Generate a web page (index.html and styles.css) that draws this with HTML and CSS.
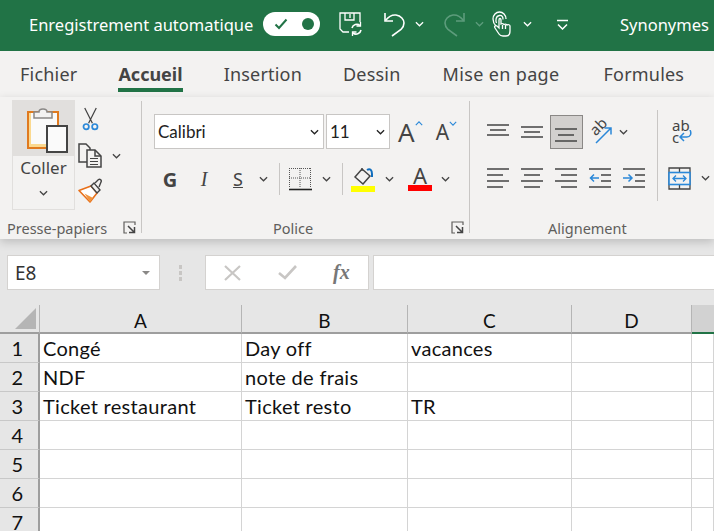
FILE: index.html
```html
<!DOCTYPE html>
<html lang="fr">
<head>
    <meta charset="UTF-8">
    <title>Synonymes - Excel</title>
    <link rel="stylesheet" href="styles.css">
</head>
<body>
<svg class="defs" width="0" height="0">
    <symbol id="chev" viewBox="0 0 10 6"><path d="M1 1l4 4 4-4" fill="none" stroke="currentColor" stroke-width="1.4"/></symbol>
    <symbol id="launcher" viewBox="0 0 13 13"><path d="M12 4V1H1v11h3" fill="none" stroke="#605e5c" stroke-width="1.2"/><path d="M5 5l6 6M6 11.5h5.500V6" fill="none" stroke="#444" stroke-width="1.5"/></symbol>
</svg>

<div class="titlebar">
    <span class="autosave">Enregistrement automatique</span>
    <div class="toggle">
        <svg width="14" height="12" viewBox="0 0 14 12"><path d="M1.5 6.5l3.5 3.5 7.5-8.5" fill="none" stroke="#217346" stroke-width="2"/></svg>
        <span class="knob"></span>
    </div>
    <svg class="qat-save" width="25" height="26" viewBox="0 0 25 26" fill="none" stroke="#fff" stroke-width="1.3">
        <path d="M11 21H5l-3-3V2h20v9"/><path d="M7 2v7h9V2M12 3v4"/>
        <path d="M14 17a5 5 0 0 1 8-2.5M23 19a5 5 0 0 1-8 3" stroke-width="1.6"/><path d="M22.5 11v4h-4M14.5 25v-4h4"/>
    </svg>
    <svg class="qat-undo" width="23" height="26" viewBox="0 0 23 26" fill="none" stroke="#fff" stroke-width="1.6"><path d="M2 2v8h8"/><path d="M2.5 9.500C6 5 9 3.500 13 4c5 .7 8 4.500 8 8 0 3-1.500 5-3 6.500L9 25"/></svg>
    <svg class="qat-chev" width="9" height="6"><use href="#chev"/></svg>
    <svg class="qat-redo" width="23" height="26" viewBox="0 0 23 26" fill="none" stroke="#5d9c7c" stroke-width="1.6"><path d="M21 2v8h-8"/><path d="M20.5 9.500C17 5 14 3.500 10 4c-5 .7-8 4.500-8 8 0 3 1.500 5 3 6.500L14 25"/></svg>
    <svg class="qat-chev dim" width="9" height="6"><use href="#chev"/></svg>
    <svg class="qat-touch" width="19" height="26" viewBox="0 0 19 26" fill="none" stroke="#fff" stroke-width="1.3">
        <path d="M4 15C2 13 1 11 1 8c0-4 3-7 6.500-7S14 4 14 8"/><path d="M4.500 12C3.500 10 3.500 5 7.500 4.500c3-.3 3.500 2 3.500 4"/>
        <path d="M7 9v8l-2-2c-2-1-3 .5-2 2l4 6c1 1.500 2 2 4 2h3c3 0 4-2 4-5v-5c0-1-2-2-3-1-1-1-2-1-3-.5-1-1-2-1-3-.5V9c0-2-2-2-2 0z"/><path d="M10.500 14v4M13.500 14v4"/>
    </svg>
    <svg class="qat-chev" width="9" height="6"><use href="#chev"/></svg>
    <svg class="qat-more" width="11" height="11" viewBox="0 0 11 11" fill="none" stroke="#fff" stroke-width="1.5"><path d="M0 1.500h11M1 5.500l4.500 4.500L10 5.500"/></svg>
    <span class="doc-title">Synonymes</span>
</div>

<div class="tabs">
    <span class="tab">Fichier</span>
    <span class="tab active">Accueil</span>
    <span class="tab">Insertion</span>
    <span class="tab">Dessin</span>
    <span class="tab tab-page">Mise en page</span>
    <span class="tab tab-formulas">Formules</span>
</div>

<div class="ribbon">
    <div class="group group-clip">
        <div class="group-body clip-body">
            <div class="paste">
                <div class="paste-top">
                    <svg width="42" height="47" viewBox="0 0 42 47">
                        <rect x="2" y="5" width="30" height="36" fill="#fbd98f" stroke="#e07a1f" stroke-width="2"/>
                        <rect x="5" y="6" width="26" height="31" fill="#fafafa"/>
                        <path d="M8 11V5h5c0-4 8-4 8 0h5v6z" fill="#f3f2f1" stroke="#8a8886" stroke-width="1.5"/>
                        <rect x="21" y="19" width="20" height="26" fill="#fafafa" stroke="#444" stroke-width="2"/>
                    </svg>
                </div>
                <span class="paste-label">Coller</span>
                <svg class="ico-chev" width="9" height="6"><use href="#chev"/></svg>
            </div>
            <div class="clip-tools">
                <svg class="tool-cut" width="17" height="24" viewBox="0 0 17 25" fill="none">
                    <path d="M2.5 1l8 16M14.500 1l-8 16" stroke="#444" stroke-width="1.3"/>
                    <circle cx="4" cy="20.5" r="2.8" stroke="#2b88d8" stroke-width="1.8"/><circle cx="13" cy="20.5" r="2.8" stroke="#2b88d8" stroke-width="1.8"/>
                </svg>
                <div class="tool-copy">
                    <svg width="25" height="25" viewBox="0 0 25 25" fill="none" stroke="#444" stroke-width="1.5">
                        <path d="M9 19H1V1h7l4 4v2"/><path d="M9 7h8l6 6v11H9z" fill="#f3f2f1"/><path d="M17 7v6h6"/><path d="M12 15.5h8M12 18.500h8M12 21.500h8" stroke-width="1"/>
                    </svg>
                    <svg class="ico-chev" width="9" height="6"><use href="#chev"/></svg>
                </div>
                <svg class="tool-brush" width="25" height="25" viewBox="0 0 25 25" fill="none">
                    <path d="M1 12.500L13 8l6 7-7 9z" fill="#fff" stroke="#e8701a" stroke-width="1.6" stroke-linejoin="round"/>
                    <path d="M6.500 15.500l5.500 8.500 3-4z" fill="#f0953f"/>
                    <path d="M13 8l3-3 6 7-3 3z" fill="#f3f2f1" stroke="#444" stroke-width="1.4"/>
                    <path d="M17 5l3.500-3.500c1.500-1 3.500 1 2.500 2.500L21 9" fill="#f3f2f1" stroke="#444" stroke-width="1.4"/>
                </svg>
            </div>
        </div>
        <div class="group-label label-clip">
            <span>Presse-papiers</span>
            <svg width="13" height="13"><use href="#launcher"/></svg>
        </div>
    </div>

    <div class="group group-font">
        <div class="group-body font-body">
            <div class="font-row1">
                <div class="combo combo-font"><span class="combo-text">Calibri</span><svg width="9" height="6"><use href="#chev"/></svg></div>
                <div class="combo combo-size"><span class="combo-text">11</span><svg width="9" height="6"><use href="#chev"/></svg></div>
                <div class="grow-a big">A<svg width="8" height="5"><use href="#chev"/></svg></div>
                <div class="grow-a small">A<svg width="8" height="5"><use href="#chev"/></svg></div>
            </div>
            <div class="font-row2">
                <span class="fmt fmt-g">G</span>
                <span class="fmt fmt-i">I</span>
                <span class="fmt fmt-s">S</span>
                <svg class="ico-chev c-s" width="9" height="6"><use href="#chev"/></svg>
                <span class="vsep"></span>
                <svg class="ico-border" width="24" height="24" viewBox="0 0 24 24" fill="none" stroke="#555" stroke-width="1" stroke-dasharray="1 1">
                    <path d="M1.5 1v19M12 1v19M22.500 1v19M1 1.500h22M1 11h22"/><path d="M1 22.5h23" stroke="#222" stroke-width="1.6" stroke-dasharray="none"/>
                </svg>
                <svg class="ico-chev c-b" width="9" height="6"><use href="#chev"/></svg>
                <span class="vsep"></span>
                <div class="colour colour-fill">
                    <svg width="24" height="18" viewBox="0 0 24 18" fill="none">
                        <path d="M4 10L11 2l8 7-7 8z" stroke="#444" stroke-width="1.5"/><path d="M11 4V1" stroke="#444" stroke-width="1.3"/>
                        <path d="M16 3c3-2 5 0 5 4v3" stroke="#106ebe" stroke-width="2"/>
                    </svg>
                    <span class="swatch swatch-y"></span>
                </div>
                <svg class="ico-chev c-f" width="9" height="6"><use href="#chev"/></svg>
                <div class="colour colour-text">
                    <span class="colour-a">A</span>
                    <span class="swatch swatch-r"></span>
                </div>
                <svg class="ico-chev c-t" width="9" height="6"><use href="#chev"/></svg>
            </div>
        </div>
        <div class="group-label label-font">
            <span>Police</span>
            <svg width="13" height="13"><use href="#launcher"/></svg>
        </div>
    </div>

    <div class="group group-align">
        <div class="group-body align-body">
            <div class="align-grid">
                <div class="cell-ico"><svg width="22" height="12" viewBox="0 0 22 12" class="shift-up"><path d="M0 1h22M3 6h16M0 11h22" stroke="#444" stroke-width="1.5"/></svg></div>
                <div class="cell-ico"><svg width="22" height="12" viewBox="0 0 22 12"><path d="M0 1h22M3 6h16M0 11h22" stroke="#444" stroke-width="1.5"/></svg></div>
                <div class="cell-ico selected"><svg width="22" height="14" viewBox="0 0 22 14" class="shift-down"><path d="M0 1h22M3 7h16M0 13h22" stroke="#444" stroke-width="1.5"/></svg></div>
                <div class="cell-ico orient">
                    <span class="orient-text">ab</span>
                    <svg width="18" height="18" viewBox="0 0 18 18" fill="none" stroke="#2b88d8" stroke-width="1.5"><path d="M1 17L16 2M9.500 2H16v6.500"/></svg>
                </div>
                <svg class="ico-chev orient-chev" width="9" height="6"><use href="#chev"/></svg>
                <div class="cell-ico"><svg width="22" height="20" viewBox="0 0 22 20"><path d="M0 1h22M0 7h16M0 13h22M0 19h16" stroke="#444" stroke-width="1.5"/></svg></div>
                <div class="cell-ico"><svg width="22" height="20" viewBox="0 0 22 20"><path d="M0 1h22M3 7h16M0 13h22M3 19h16" stroke="#444" stroke-width="1.5"/></svg></div>
                <div class="cell-ico"><svg width="22" height="20" viewBox="0 0 22 20"><path d="M0 1h22M6 7h16M0 13h22M6 19h16" stroke="#444" stroke-width="1.5"/></svg></div>
                <div class="cell-ico"><svg width="22" height="20" viewBox="0 0 22 20" fill="none"><path d="M0 1h22M12 7h10M12 13h10M0 19h22" stroke="#444" stroke-width="1.5"/><path d="M10 10H1M5 6.500L1.500 10 5 13.500" stroke="#2b88d8" stroke-width="1.5"/></svg></div>
                <div class="cell-ico"><svg width="22" height="20" viewBox="0 0 22 20" fill="none"><path d="M0 1h22M12 7h10M12 13h10M0 19h22" stroke="#444" stroke-width="1.5"/><path d="M0 10h9M5.500 6.500L9 10l-3.500 3.500" stroke="#2b88d8" stroke-width="1.5"/></svg></div>
            </div>
            <span class="vsep tall"></span>
            <div class="wrap-col">
                <div class="wrap-ico">
                    <span class="wrap-text">ab<br>c</span>
                    <svg width="14" height="13" viewBox="0 0 14 13" fill="none" stroke="#2b88d8" stroke-width="1.5"><path d="M12 0c2 4 0 7-3 7H2M6 3L2 7l4 4"/></svg>
                </div>
                <div class="merge">
                    <svg width="23" height="23" viewBox="0 0 23 23" fill="none">
                        <path d="M1 1h21v21H1zM11.500 1v21" stroke="#444" stroke-width="1.3"/>
                        <rect x="1" y="5.500" width="21" height="12" fill="#f3f2f1" stroke="#2b88d8" stroke-width="1.6"/>
                        <path d="M5 11.500h13M8 8.500l-3 3 3 3M15 8.500l3 3-3 3" stroke="#2b88d8" stroke-width="1.3"/>
                    </svg>
                    <svg class="ico-chev" width="9" height="6"><use href="#chev"/></svg>
                </div>
            </div>
        </div>
        <div class="group-label label-align"><span>Alignement</span></div>
    </div>
</div>

<div class="formula">
    <div class="namebox"><span>E8</span><i class="tri"></i></div>
    <div class="grip"><i></i><i></i><i></i></div>
    <div class="fx-box">
        <svg width="17" height="16" viewBox="0 0 17 16"><path d="M1 1l15 14M16 1L1 15" stroke="#c8c6c4" stroke-width="2.2"/></svg>
        <svg width="19" height="15" viewBox="0 0 19 15"><path d="M1 8l6 5L18 1" fill="none" stroke="#c8c6c4" stroke-width="2.6"/></svg>
        <span class="fx">fx</span>
    </div>
    <div class="formula-input"></div>
</div>

<div class="sheet">
    <div class="corner"><i></i></div>
    <div class="col-head">A</div>
    <div class="col-head">B</div>
    <div class="col-head">C</div>
    <div class="col-head">D</div>
    <div class="col-head active"></div>

    <div class="row-head">1</div>
    <div class="cell">Congé</div><div class="cell">Day off</div><div class="cell">vacances</div><div class="cell"></div><div class="cell"></div>
    <div class="row-head">2</div>
    <div class="cell">NDF</div><div class="cell">note de frais</div><div class="cell"></div><div class="cell"></div><div class="cell"></div>
    <div class="row-head">3</div>
    <div class="cell">Ticket restaurant</div><div class="cell">Ticket resto</div><div class="cell">TR</div><div class="cell"></div><div class="cell"></div>
    <div class="row-head">4</div>
    <div class="cell"></div><div class="cell"></div><div class="cell"></div><div class="cell"></div><div class="cell"></div>
    <div class="row-head">5</div>
    <div class="cell"></div><div class="cell"></div><div class="cell"></div><div class="cell"></div><div class="cell"></div>
    <div class="row-head">6</div>
    <div class="cell"></div><div class="cell"></div><div class="cell"></div><div class="cell"></div><div class="cell"></div>
    <div class="row-head">7</div>
    <div class="cell"></div><div class="cell"></div><div class="cell"></div><div class="cell"></div><div class="cell"></div>
</div>
</body>
</html>
```

FILE: styles.css
```css
* {
    box-sizing: border-box;
}

html, body {
    margin: 0;
    width: 714px;
    height: 531px;
    overflow: hidden;
}

body {
    font-family: "Noto Sans", "Open Sans", sans-serif;
    background-color: #e6e6e6;
    color: #444;
}

svg {
    display: block;
    flex: none;
}

.defs {
    position: absolute;
}

/* title bar */
.titlebar {
    display: flex;
    align-items: center;
    height: 51px;
    padding: 0 0 3px 29px;
    background-color: #217346;
    color: #fff;
    white-space: nowrap;
}

.autosave {
    width: 234px;
    font-size: 16.5px;
}

.toggle {
    display: flex;
    align-items: center;
    justify-content: space-between;
    width: 57px;
    height: 24px;
    padding: 0 6px 0 11px;
    border-radius: 12px;
    background-color: #fff;
}

.knob {
    width: 12px;
    height: 12px;
    border-radius: 50%;
    background-color: #217346;
}

.qat-save { margin-left: 18px; }
.qat-undo { margin-left: 20px; }
.qat-chev { margin-left: 9px; color: #fff; }
.qat-chev.dim { color: #5d9c7c; }
.qat-redo { margin-left: 19px; }
.qat-touch { margin-left: 8px; }
.qat-touch + .qat-chev { margin-left: 12px; }
.qat-more { margin-left: 25px; }

.doc-title {
    margin-left: 52px;
    font-size: 16.5px;
}

/* tabs */
.tabs {
    display: flex;
    gap: 41px;
    height: 46px;
    padding: 10px 0 0 20px;
    background-color: #f3f2f1;
    white-space: nowrap;
}

.tab {
    height: 31px;
    font-size: 18px;
    letter-spacing: 0.2px;
    line-height: 26px;
}

.tab.active {
    font-weight: 700;
    letter-spacing: 0;
    border-bottom: 4px solid #217346;
    color: #444;
}

.tab-page { margin-left: 1px; letter-spacing: 0.35px; }
.tab-formulas { margin-left: 3px; }

/* ribbon */
.ribbon {
    display: flex;
    height: 142px;
    background-color: #f3f2f1;
    box-shadow: 0 3px 9px rgba(0, 0, 0, 0.18);
    position: relative;
}

.group {
    display: flex;
    flex-direction: column;
    border-right: 1px solid #c8c6c4;
    margin-top: 4px;
    margin-bottom: 6px;
}

.group-clip { width: 142px; }
.group-font { width: 328px; }
.group-align { width: 244px; border-right: none; }

.group-body {
    flex: 1;
    display: flex;
}

.group-label {
    display: flex;
    align-items: center;
    height: 21px;
    margin-bottom: -5px;
    font-size: 14.5px;
    color: #605e5c;
    white-space: nowrap;
}

.label-clip { padding-left: 7px; gap: 16px; }
.label-font { padding-left: 131px; gap: 138px; }
.label-align { padding-left: 78px; }

/* clipboard */
.clip-body {
    padding-left: 12px;
}

.paste {
    display: flex;
    flex-direction: column;
    align-items: center;
    width: 63px;
    height: 110px;
    margin-top: -1px;
    border: 1px solid #e1dfdd;
    border-top: none;
}

.paste-top {
    width: 63px;
    height: 56px;
    padding: 7px 0 0 14px;
    background-color: #e1dfdd;
}

.paste-label {
    font-size: 17px;
    line-height: 22px;
    margin-top: 1px;
}

.paste .ico-chev {
    margin-top: 11px;
}

.clip-tools {
    display: flex;
    flex-direction: column;
    padding: 6px 0 0 3px;
}

.tool-cut { margin-left: 4px; }

.tool-copy {
    display: flex;
    align-items: center;
    gap: 9px;
    margin-top: 12px;
}

.tool-brush { margin-top: 10px; }

/* font */
.font-body {
    flex-direction: column;
    padding: 13px 0 0 12px;
}

.font-row1 {
    display: flex;
    align-items: center;
    height: 35px;
}

.combo {
    display: flex;
    align-items: center;
    justify-content: space-between;
    height: 35px;
    padding: 0 4px 0 3px;
    border: 1px solid #c8c6c4;
    background-color: #fff;
    font-family: Lato, sans-serif;
    font-size: 17px;
    color: #222;
}

.combo-font { width: 170px; }
.combo-size { width: 64px; margin-left: 2px; }

.grow-a {
    display: flex;
    align-items: flex-start;
    color: #444;
}

.grow-a svg { color: #2b88d8; }

.grow-a.big {
    margin-left: 8px;
    font-size: 26px;
    line-height: 32px;
}

.grow-a.big svg { transform: rotate(180deg); margin-top: 5px; }

.grow-a.small {
    margin-left: 13px;
    font-size: 21px;
    line-height: 32px;
}

.grow-a.small svg { margin-top: 5px; }

.font-row2 {
    display: flex;
    align-items: center;
    height: 36px;
    margin-top: 12px;
    padding-left: 7px;
}

.fmt {
    width: 18px;
    text-align: center;
    font-size: 20px;
}

.fmt-g { font-weight: 700; }

.fmt-i {
    margin-left: 16px;
    font-family: "Liberation Serif", serif;
    font-style: italic;
}

.fmt-s {
    margin-left: 16px;
    text-decoration: underline;
    font-size: 18px;
}

.c-s { margin-left: 12px; }

.vsep {
    width: 1px;
    height: 32px;
    background-color: #c8c6c4;
    flex: none;
}

.font-row2 .vsep {
    margin-left: 11px;
}

.ico-border { margin-left: 8px; }
.c-b { margin-left: 10px; }

.colour {
    display: flex;
    flex-direction: column;
    align-items: center;
    width: 24px;
    margin-left: 8px;
}

.swatch {
    width: 24px;
    height: 6px;
}

.swatch-y { background-color: #ffff00; }
.swatch-r { background-color: #ff0000; }

.colour-a {
    font-size: 22px;
    line-height: 19px;
}

.colour-fill svg { margin-bottom: 1px; }
.c-f { margin-left: 10px; }
.colour-text { margin-left: 14px; margin-top: -1px; }
.c-t { margin-left: 9px; }

/* alignment */
.align-body {
    padding: 14px 0 0 11px;
}

.align-grid {
    display: grid;
    grid-template-columns: repeat(5, 34px);
    grid-template-rows: 34px 34px;
    row-gap: 12px;
    align-items: center;
    justify-items: center;
    width: 176px;
}

.cell-ico {
    display: flex;
    align-items: center;
    justify-content: center;
    width: 33px;
    height: 34px;
}

.cell-ico.selected {
    background-color: #d2d0ce;
    border: 1px solid #8a8886;
}

.shift-up { margin-top: -4px; }
.shift-down { margin-top: 6px; }

.orient {
    position: relative;
}

.orient-text {
    position: absolute;
    left: 5px;
    top: 3px;
    font-size: 15px;
    line-height: 16px;
    transform: rotate(-45deg);
}

.orient svg {
    margin: 5px 0 0 8px;
}

.orient-chev {
    justify-self: start;
    margin-left: 2px;
}

.vsep.tall {
    height: 91px;
    margin-top: -5px;
}

.wrap-col {
    display: flex;
    flex-direction: column;
    padding-left: 10px;
}

.wrap-ico {
    position: relative;
    width: 26px;
    height: 34px;
}

.wrap-text {
    display: block;
    padding: 4px 0 0 4px;
    font-size: 15px;
    line-height: 12px;
}

.wrap-ico svg {
    position: absolute;
    left: 10px;
    top: 15px;
}

.merge {
    display: flex;
    align-items: center;
    gap: 10px;
    height: 34px;
    margin-top: 12px;
}

/* formula bar */
.formula {
    display: flex;
    height: 35px;
    margin-top: 16px;
    padding-left: 7px;
}

.namebox {
    display: flex;
    align-items: center;
    justify-content: space-between;
    width: 153px;
    padding: 0 9px 0 7px;
    border: 1px solid #d4d2d0;
    background-color: #fff;
    font-size: 19px;
    color: #333;
}

.tri {
    width: 0;
    height: 0;
    border-left: 4px solid transparent;
    border-right: 4px solid transparent;
    border-top: 4px solid #8a8886;
}

.grip {
    display: flex;
    flex-direction: column;
    justify-content: center;
    gap: 2px;
    width: 45px;
    padding-left: 19px;
}

.grip i {
    width: 3px;
    height: 4px;
    background-color: #c8c6c4;
}

.fx-box {
    display: flex;
    align-items: center;
    width: 164px;
    padding-left: 18px;
    gap: 37px;
    border: 1px solid #d4d2d0;
    background-color: #fff;
}

.fx {
    margin-left: -1px;
    font-family: "Liberation Serif", serif;
    font-style: italic;
    font-weight: 700;
    font-size: 20px;
    color: #777;
}

.formula-input {
    flex: 1;
    margin-left: 4px;
    border: 1px solid #d4d2d0;
    border-right: none;
    background-color: #fff;
}

/* sheet */
.sheet {
    display: grid;
    grid-template-columns: 40px 202px 166px 164px 120px 22px;
    grid-template-rows: repeat(8, 29px);
    margin-top: 15px;
    background-color: #fff;
    font-family: Lato, sans-serif;
    font-size: 20px;
    letter-spacing: 0.3px;
    color: #111;
}

.corner {
    display: flex;
    align-items: flex-end;
    justify-content: flex-end;
    padding: 0 3px 3px 0;
    background-color: #e6e6e6;
    border-right: 1px solid #b5b5b5;
    border-bottom: 2px solid #9e9e9e;
}

.corner i {
    width: 21px;
    height: 21px;
    background-color: #b5b5b5;
    clip-path: polygon(100% 0, 100% 100%, 0 100%);
}

.col-head {
    display: flex;
    align-items: center;
    justify-content: center;
    padding-top: 3px;
    background-color: #e6e6e6;
    border-right: 1px solid #b5b5b5;
    border-bottom: 2px solid #9e9e9e;
    font-size: 19px;
}

.col-head.active {
    background-color: #d2d2d2;
    border-right: none;
    border-bottom: 2px solid #217346;
}

.row-head {
    display: flex;
    align-items: center;
    justify-content: center;
    padding-right: 3px;
    background-color: #e6e6e6;
    border-right: 2px solid #9e9e9e;
    border-bottom: 1px solid #c8c8c8;
}

.cell {
    padding: 1px 0 0 3px;
    border-right: 1px solid #d4d4d4;
    border-bottom: 1px solid #d4d4d4;
    line-height: 27px;
    white-space: nowrap;
}
```
